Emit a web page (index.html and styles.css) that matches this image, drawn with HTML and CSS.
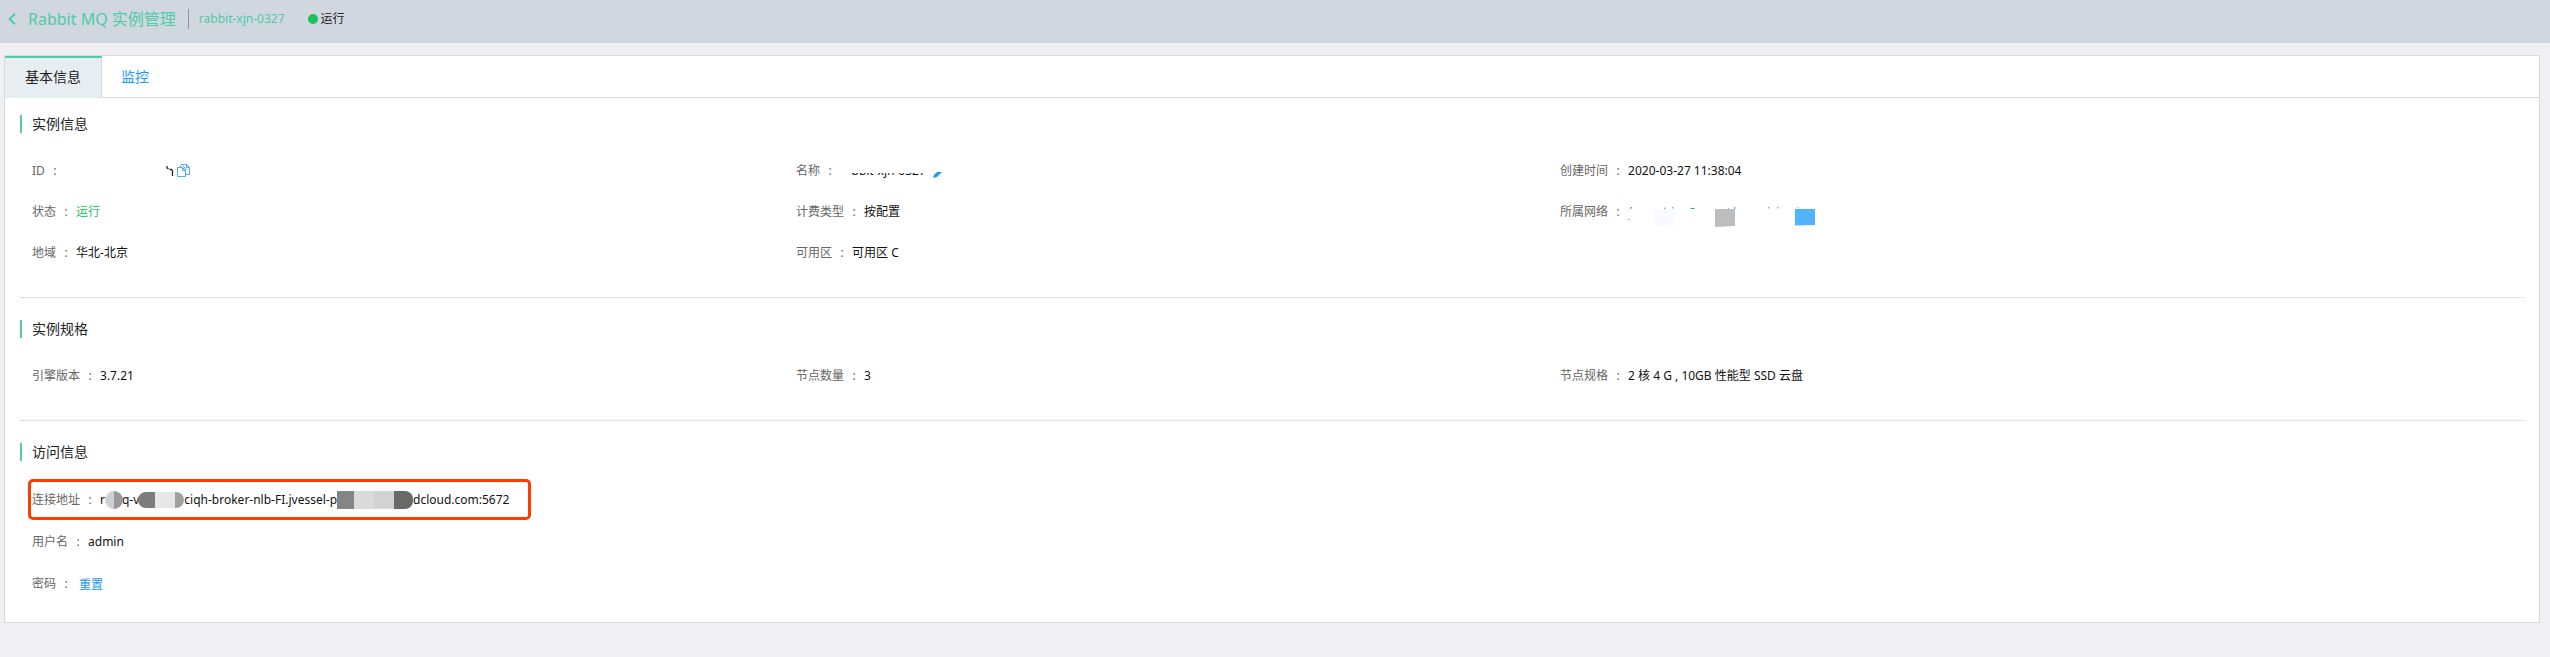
FILE: index.html
```html
<!DOCTYPE html>
<html lang="zh-CN">
<head>
<meta charset="utf-8">
<title>Rabbit MQ 实例管理</title>
<link rel="stylesheet" href="styles.css">
</head>
<body>
<header class="topbar">
  <a class="back" href="#" aria-label="返回">
    <svg width="8" height="12" viewBox="0 0 8 12"><path d="M7 .8 1.6 6 7 11.2" fill="none" stroke="#4fcaa8" stroke-width="2"/></svg>
  </a>
  <h1 class="topbar-title">Rabbit MQ 实例管理</h1>
  <span class="topbar-name">rabbit-xjn-0327</span>
  <span class="topbar-status"><i class="dot"></i>运行</span>
</header>
<main class="panel">
  <nav class="tabs">
    <a class="tab tab-active" href="#">基本信息</a>
    <a class="tab" href="#">监控</a>
  </nav>
  <section class="section">
    <h2 class="section-title">实例信息</h2>
    <dl class="grid">
      <div class="item"><dt>ID</dt><dd class="id-value">
        <svg width="8" height="12" viewBox="0 0 8 12"><path d="M1 1v2l1.500 1M3.500 4.500h2l1 1.500v5" fill="none" stroke="#222" stroke-width="1.300"/></svg>
        <button class="icon-button" type="button" aria-label="复制"><svg width="13" height="13" viewBox="0 0 13 13"><path d="M.5 3.500h5l3 3v6h-8zM5.500 3.500v3h3M3.500 3.500v-2l1-1h5l3 3v7h-4M9.500.5v3h3M5.500 1.500l4 4" fill="none" stroke="#4aaef5"/></svg></button>
      </dd></div>
      <div class="item"><dt>名称</dt><dd class="name-value"><span class="masked">rabbit-xjn-0327</span>
        <svg class="edit" width="9" height="6" viewBox="0 0 9 6"><path d="M0 6 1 3 4 0h5L4 5z" fill="#2199f5"/></svg></dd></div>
      <div class="item"><dt>创建时间</dt><dd>2020-03-27 11:38:04</dd></div>
      <div class="item"><dt>状态</dt><dd class="running">运行</dd></div>
      <div class="item"><dt>计费类型</dt><dd>按配置</dd></div>
      <div class="item"><dt>所属网络</dt><dd class="network-value">
        <svg width="190" height="20" viewBox="0 0 190 20">
          <path d="M27 2h20v16l-20 1z" fill="#f7fbff"/><path d="M87 2h20v17l-20 1z" fill="#bdbdbd"/><path d="M167 2h20v16l-20 .5z" fill="#50b4ff"/>
          <path d="M2 0h2v1l-1 1H2zM0 12h2v1H0zM36 .5h1.500V2H36zM44 0h1.500v1.500H44zM100 1h1v1h-1zM106 0h1.500v2H106zM140 0h1.500v1.500H140zM149 0h1.500v1.500H149z" fill="#62b7fa"/><path d="M62 2q3-2.500 5 0z" fill="#2199f5"/><path d="M168 0h3v1h-3z" fill="#ddd"/>
        </svg></dd></div>
      <div class="item"><dt>地域</dt><dd>华北-北京</dd></div>
      <div class="item"><dt>可用区</dt><dd>可用区 C</dd></div>
    </dl>
  </section>
  <section class="section">
    <h2 class="section-title">实例规格</h2>
    <dl class="grid">
      <div class="item"><dt>引擎版本</dt><dd>3.7.21</dd></div>
      <div class="item"><dt>节点数量</dt><dd>3</dd></div>
      <div class="item"><dt>节点规格</dt><dd>2 核 4 G , 10GB 性能型 SSD 云盘</dd></div>
    </dl>
  </section>
  <section class="section">
    <h2 class="section-title">访问信息</h2>
    <dl class="stack">
      <div class="item item-marked"><dt>连接地址</dt><dd class="address">
        <span>r</span><i class="blur blur-a"></i><span>q-v</span><i class="blur blur-b"></i><span>ciqh-broker-nlb-FI.jvessel-p</span><i class="blur blur-c"></i><span>dcloud.com:5672</span>
      </dd></div>
      <div class="item"><dt>用户名</dt><dd>admin</dd></div>
      <div class="item"><dt>密码</dt><dd><a class="reset" href="#">重置</a></dd></div>
    </dl>
  </section>
</main>
</body>
</html>
```
FILE: styles.css
```css
* { box-sizing: border-box; }

body {
  margin: 0;
  background: #f0f0f2;
  color: #111;
  font: 12px/18px "Noto Sans", "Noto Sans CJK SC", sans-serif;
}

a { text-decoration: none; }
h1, h2, dl, dd { margin: 0; font-weight: 400; }
svg { display: block; flex: none; }

.topbar {
  display: flex;
  align-items: center;
  height: 43px;
  padding: 0 8px 6px;
  background: #d0d7df;
  color: #4fcaa8;
}
.back { margin-right: 12px; }
.topbar-title {
  padding-right: 12px;
  border-right: 1px solid #8f959b;
  font-size: 16px;
  line-height: 20px;
}
.topbar-name { margin-left: 10px; }
.topbar-status {
  display: flex;
  align-items: center;
  gap: 3px;
  margin-left: 23px;
  color: #222;
}
.dot { width: 10px; height: 10px; border-radius: 50%; background: #1bc15c; }

.panel {
  margin: 12px 10px 34px 4px;
  border: 1px solid #d3dae3;
  background: #fff;
}
.tabs {
  display: flex;
  height: 42px;
  border-bottom: 1px solid #d3dae3;
}
.tab {
  height: 42px;
  padding: 0 19px;
  color: #2199f5;
  font-size: 14px;
  line-height: 42px;
}
.tab-active {
  padding: 0 20px;
  border-top: 2px solid #4fcaa8;
  border-right: 1px solid #d3dae3;
  background: #e7eef2;
  color: #222;
  line-height: 38px;
}

.section {
  margin: 0 15px;
  padding: 22px 0 24px;
}
.section:nth-of-type(1) { padding-top: 17px; }
.section:last-child { padding-bottom: 18px; }
.section + .section { border-top: 1px dotted #ccc; }
.section-title {
  margin-bottom: 17px;
  padding-left: 10px;
  border-left: 2px solid #4fcaa8;
  color: #222;
  font-size: 14px;
  line-height: 18px;
}
.grid {
  display: grid;
  grid-template-columns: 30.66% 30.66% 1fr;
  padding-left: 12px;
}
.stack {
  display: flex;
  flex-direction: column;
  align-items: flex-start;
  gap: 1px;
  padding: 1px 0 0 12px;
}
.item {
  display: flex;
  align-items: center;
  height: 41px;
}
dt { display: flex; color: #666; }
dt::after { content: ":"; width: 20px; text-align: center; }
dd { display: flex; align-items: center; }

.id-value { gap: 3px; padding-left: 101px; }
.icon-button { padding: 0; border: 0; background: none; }
.name-value { gap: 7px; }
.edit { margin-top: 8px; }
.network-value { padding-top: 10px; }
.masked { position: relative; }
.masked::before,
.masked::after {
  content: "";
  position: absolute;
  left: 0;
  background: #fff;
}
.masked::before { top: 0; width: 100%; height: 11px; }
.masked::after { bottom: 0; width: 12px; height: 18px; }
.running { color: #1bc15c; }
.reset { padding: 2px 0 0 3px; color: #2199f5; }

.item-marked { position: relative; }
.item-marked::after {
  content: "";
  position: absolute;
  inset: 0 -22px 0 -4px;
  border: 3px solid #ff3c00;
  border-radius: 5px;
}
.blur { position: relative; height: 18px; }
.blur-a {
  width: 18px;
  margin-right: -1px;
  border-radius: 50%;
  background: linear-gradient(90deg, #d0d0d0 50%, #999 50%);
}
.blur-b {
  width: 46px;
  height: 16px;
  margin-left: -1px;
  border-radius: 8px;
  background: linear-gradient(90deg, #7c7c7c 17px, #e7e7e7 17px 37px, #a0a0a0 37px);
}
.blur-c {
  width: 76px;
  border-radius: 0 8px 8px 0;
  background: linear-gradient(90deg, #858585 17px, #dadada 17px 37px, #d2d2d2 37px 57px, #696969 57px);
}
```
